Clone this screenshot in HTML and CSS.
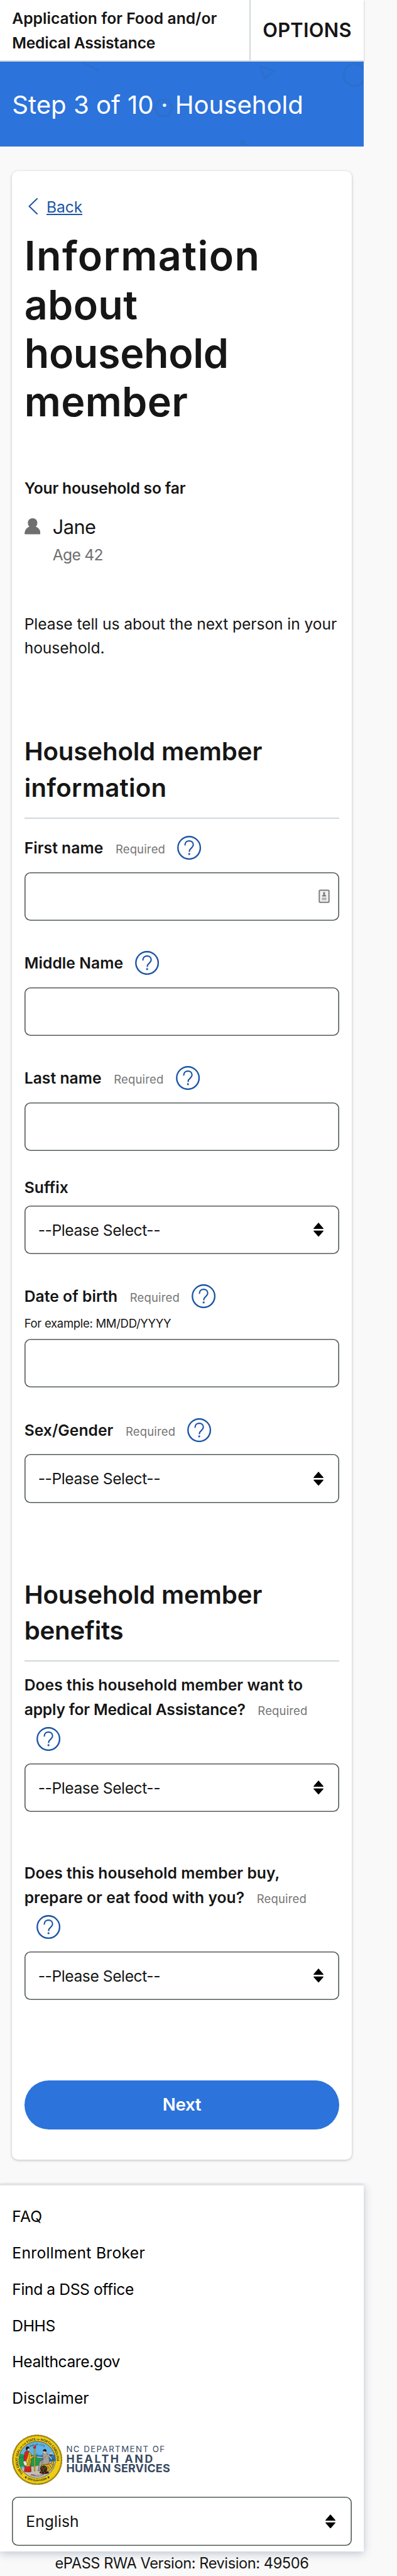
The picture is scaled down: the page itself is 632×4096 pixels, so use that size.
FILE: index.html
```html
<!DOCTYPE html>
<html lang="en">
<head>
<meta charset="utf-8">
<title>ePASS - Household</title>
<link rel="stylesheet" href="styles.css">
</head>
<body>
<svg class="defs" aria-hidden="true">
  <symbol id="help" viewBox="0 0 24 24">
    <circle cx="12" cy="12" r="11.2" fill="none" stroke="currentColor" stroke-width="1.5"/>
    <path d="M7.85 9.1C7.9 6.7 9.6 5.1 12.05 5.1c2.4 0 4.1 1.6 4.1 3.9 0 3.4-3.9 3.3-3.9 6.5" fill="none" stroke="currentColor" stroke-width="1.35" stroke-linecap="round"/>
    <circle cx="12.05" cy="18.2" r="1" fill="currentColor"/>
  </symbol>
  <symbol id="sort" viewBox="0 0 16 22.6">
    <path d="M8 0.1 15.800 8.9Q16.2 9.9 15.2 9.9H.8Q-.2 9.9.2 8.9ZM8 22.5 15.800 13.7Q16.2 12.7 15.2 12.7H.8Q-.2 12.7.2 13.7Z"/>
  </symbol>
</svg>

<div class="page">
  <header class="topbar">
    <div class="app-title">Application for Food and/or<br><span class="line2">Medical Assistance</span></div>
    <button class="options" type="button">OPTIONS</button>
  </header>

  <div class="banner">
    <svg class="banner-art" viewBox="0 0 579 135" fill="none" stroke="#2d6fcb" stroke-width="3" aria-hidden="true">
      <path d="M133 2 157 14"/>
      <path d="M414.500 8 437 14 421 27Z"/>
      <ellipse cx="564.500" cy="21" rx="17.500" ry="17.500"/>
      <path d="M253 61.500h15l7 12-7 13h-15l-7-13Z"/>
      <circle cx="386.600" cy="129" r="4" fill="#2d6fcb" stroke="none"/>
      <circle cx="54" cy="60" r="4" fill="#2d6fcb" stroke="none"/>
    </svg>
    <div class="step">Step 3 of 10 · Household</div>
  </div>

  <main class="card">
    <div class="back">
      <svg class="chevron" viewBox="0 0 15 26" aria-hidden="true"><path d="M14 1 1.500 13 14 25" fill="none" stroke="currentColor" stroke-width="2" stroke-linecap="round" stroke-linejoin="round"/></svg>
      <a class="back-link" href="#">Back</a>
    </div>
    <h1 class="title">Information<br><span class="tight">about</span><br><span class="tighter">household</span><br><span class="tight">member</span></h1>

    <div class="sofar">Your household so far</div>
    <div class="person">
      <svg class="avatar" viewBox="0 0 26 26" aria-hidden="true"><path d="M13 0c4.300 0 7.600 3 7.600 7.400 0 2.800-.8 4.900-2.500 6.300 4.300 1.300 7.500 5.300 7.900 11.300q0 1-1 1H1q-1 0-1-1c.4-6 3.600-10 7.900-11.300C6.200 12.300 5.400 10.200 5.400 7.400 5.400 3 8.700 0 13 0Z" fill="#6f6f6f"/></svg>
      <div>
        <div class="name">Jane</div>
        <div class="age">Age 42</div>
      </div>
    </div>
    <p class="intro">Please tell us about the next person in your<br>household.</p>

    <h2 class="section">Household member<br><span class="sec2">information</span></h2>

    <div class="field first">
      <div class="label-row"><label class="label">First name<span class="required">Required</span></label><svg class="help"><use href="#help"/></svg></div>
      <div class="control">
        <input class="input" type="text">
        <svg class="autofill" viewBox="0 0 18 22" aria-hidden="true"><rect x="1.300" y="1.300" width="15.400" height="19.400" rx="1.500" fill="#f2f2f2" stroke="#7e7e7e" stroke-width="2"/><path d="M9 4.200c1.400 0 1.600 1.200 1.500 2.400-.1.900-.3 1.400-.3 1.900l2 1.200v1.700H5.800V9.700l2-1.200c0-.5-.2-1-.3-1.900C7.400 5.400 7.600 4.200 9 4.200Z" fill="#7c7c7c"/><path d="M5.300 13h7.400v4.200H5.300Z" fill="#b5b5b5"/></svg>
      </div>
    </div>
    <div class="field">
      <div class="label-row"><label class="label">Middle Name</label><svg class="help"><use href="#help"/></svg></div>
      <div class="control"><input class="input" type="text"></div>
    </div>
    <div class="field">
      <div class="label-row"><label class="label">Last name<span class="required">Required</span></label><svg class="help"><use href="#help"/></svg></div>
      <div class="control"><input class="input" type="text"></div>
    </div>
    <div class="field plain">
      <div class="label-row"><label class="label">Suffix</label></div>
      <div class="control"><select class="input select"><option>--Please Select--</option></select><svg class="sort"><use href="#sort"/></svg></div>
    </div>
    <div class="field dob">
      <div class="label-row"><label class="label">Date of birth<span class="required">Required</span></label><svg class="help"><use href="#help"/></svg></div>
      <div class="hint">For example: MM/DD/YYYY</div>
      <div class="control"><input class="input" type="text"></div>
    </div>
    <div class="field">
      <div class="label-row"><label class="label">Sex/Gender<span class="required">Required</span></label><svg class="help"><use href="#help"/></svg></div>
      <div class="control"><select class="input select"><option>--Please Select--</option></select><svg class="sort"><use href="#sort"/></svg></div>
    </div>

    <h2 class="section">Household member<br><span class="sec3">benefits</span></h2>

    <div class="question q1">
      <label class="label">Does this household member want to<br><span class="ask">apply for Medical Assistance?</span><span class="required">Required</span></label>
      <svg class="help"><use href="#help"/></svg>
      <div class="control"><select class="input select"><option>--Please Select--</option></select><svg class="sort"><use href="#sort"/></svg></div>
    </div>
    <div class="question q2">
      <label class="label">Does this household member buy,<br>prepare or eat food with you?<span class="required">Required</span></label>
      <svg class="help"><use href="#help"/></svg>
      <div class="control"><select class="input select"><option>--Please Select--</option></select><svg class="sort"><use href="#sort"/></svg></div>
    </div>

    <button class="next" type="button">Next</button>
  </main>

  <footer class="footer">
    <nav class="links">
      <a class="link wide" href="#">FAQ</a>
      <a class="link wide" href="#">Enrollment Broker</a>
      <a class="link narrow" href="#">Find a DSS office</a>
      <a class="link narrow" href="#">DHHS</a>
      <a class="link narrow" href="#">Healthcare.gov</a>
      <a class="link" href="#">Disclaimer</a>
    </nav>
    <div class="brand">
      <svg class="seal" viewBox="18 36 450 450" role="img" aria-label="The Great Seal of the State of North Carolina">
        <defs>
          <path id="ringTop" d="M119 382A173 173 0 1 1 367 382"/>
          <path id="ringBottom" d="M106 396A194 194 0 0 0 380 396"/>
          <path id="innerTop" d="M156 166A128 128 0 0 1 330 166"/>
          <path id="innerBottom" d="M142 371A150 150 0 0 0 344 371"/>
          <clipPath id="scene"><circle cx="243" cy="261" r="161"/></clipPath>
        </defs>
        <circle cx="243" cy="261" r="224" fill="#d4b11b"/>
        <circle cx="243" cy="261" r="219" fill="none" stroke="#5a4c16" stroke-width="9" stroke-dasharray="3 4"/>
        <circle cx="243" cy="261" r="213" fill="#f0cd14" stroke="#4a4018" stroke-width="2"/>
        <circle cx="243" cy="261" r="163" fill="#62b3e6" stroke="#2a2a22" stroke-width="4"/>
        <g clip-path="url(#scene)">
          <path d="M235 219H410V285H235Z" fill="#1c6cb8"/>
          <path d="M235 226h150M240 236h150" stroke="#5ba4dc" stroke-width="3"/>
          <path d="M78 220c25-22 48-5 60 4 30-22 62-12 82 10 40 6 60 16 92 48l20 40H78Z" fill="#1f9a52"/>
          <path d="M84 250c30-20 50-14 66-4M200 225c-16 18-22 40-24 60" fill="none" stroke="#1a4c30" stroke-width="3"/>
          <path d="M78 350c40-16 62-12 104-28 60 4 110-22 150-42l78-6v160H78Z" fill="#c6beb3"/>
          <path d="M350 214h32l-4 12h-24Z" fill="#4b3c34"/>
          <path d="M353 195h8v16h-8ZM363 191h8v20h-8ZM373 196h8v15h-8Z" fill="#eee" stroke="#666" stroke-width="1.500"/>
        </g>
        <path d="M132 196c8-14 22-16 38-8l16 24-4 66 8 88-14 4-48-4 10-80-14-26Z" fill="#e0201f" stroke="#2a1a14" stroke-width="3"/>
        <path d="M168 190c16 6 24 18 22 42l24-10 4 8-28 22c-2 34-6 58-12 68l-42 2c0-42 14-68 20-84Z" fill="#e8bd1c" stroke="#3a2c12" stroke-width="3"/>
        <path d="M172 206c8 28-6 62-14 104M184 250c-6 20-10 40-12 62" fill="none" stroke="#3a2c12" stroke-width="3"/>
        <circle cx="157" cy="166" r="14" fill="#efc9a2"/>
        <path d="M142 170c-4-20 6-30 18-28 14 2 16 14 12 20-12-4-16 4-18 22Z" fill="#1d1712"/>
        <path d="M150 342l-8 26M166 344l-2 26M178 330l4 36" stroke="#7d0f12" stroke-width="3"/>
        <path d="M116 276l24-6 16 34-26 10Z" fill="#fff" stroke="#222" stroke-width="3"/>
        <path d="M124 284l16-4M128 292l16-5M132 300l14-5" stroke="#777" stroke-width="2"/>
        <path d="M216 158h9v204h-9Z" fill="#f0cb18" stroke="#4a3a10" stroke-width="2.500"/>
        <path d="M210 158c-4-14 6-20 20-26 4 12 0 20-4 28Z" fill="#d81f26" stroke="#3a1010" stroke-width="2"/>
        <path d="M232 204l8 34M248 206l-6 34M226 222l16 20" stroke="#1c3a2a" stroke-width="2.500"/>
        <path d="M238 236l58 8 8-26" fill="none" stroke="#efc9a2" stroke-width="7"/>
        <path d="M292 212c10-16 40-16 46 2l14 42-2 30c-20 16-28 40-48 70l-54 4c16-18 4-58 16-82l30-20Z" fill="#a9a196" stroke="#33302c" stroke-width="3"/>
        <path d="M320 228c-14 28-34 34-42 60M300 270c-18 24-20 50-36 84" fill="none" stroke="#55504a" stroke-width="3"/>
        <circle cx="312" cy="190" r="14" fill="#efc9a2"/>
        <path d="M296 188c-4-20 12-24 22-20 12 6 10 18 2 26-2-8-12-12-24-6Z" fill="#1d1712"/>
        <path d="M340 220l34 34" stroke="#efc9a2" stroke-width="7"/>
        <path d="M382 256c14 20 10 78-34 106l-66-2c-22-28-4-58 28-56 46 0 66-14 72-48Z" fill="#e3b41b" stroke="#2f2410" stroke-width="4"/>
        <path d="M366 290l18 20M350 306l20 26M334 314l18 32" stroke="#2f2410" stroke-width="4"/>
        <ellipse cx="303" cy="340" rx="31" ry="29" fill="#3b2a16"/>
        <path d="M262 378c10-24 34-22 48-16 20-2 38 4 40 16-20 12-60 14-88 0Z" fill="#201a12"/>
        <g fill="#c8262a"><circle cx="300" cy="344" r="7"/><circle cx="282" cy="370" r="7"/><circle cx="308" cy="374" r="7"/><circle cx="328" cy="366" r="5"/></g>
        <g fill="#35843c"><circle cx="314" cy="332" r="6"/><circle cx="296" cy="361" r="6"/><circle cx="288" cy="334" r="5"/></g>
        <g class="seal-text">
          <text><textPath href="#ringTop" textLength="690">THE GREAT SEAL <tspan font-size="20">OF THE</tspan> STATE <tspan font-size="20">OF</tspan> NORTH CAROLINA</textPath></text>
          <text font-size="23"><textPath href="#ringBottom" startOffset="50%" text-anchor="middle" textLength="182">ESSE QUAM VIDERI</textPath></text>
          <text font-size="19"><textPath href="#innerTop" startOffset="50%" text-anchor="middle" textLength="132">MAY 20, 1775</textPath></text>
          <text font-size="19"><textPath href="#innerBottom" startOffset="50%" text-anchor="middle" textLength="122">APRIL 12, 1776</textPath></text>
        </g>
        <g fill="#222">
          <path d="M142 406l3 7 8 1-6 5 2 8-7-4-7 4 2-8-6-5 8-1Z"/>
          <path d="M344 406l3 7 8 1-6 5 2 8-7-4-7 4 2-8-6-5 8-1Z"/>
        </g>
      </svg>
      <div class="brand-text">
        <div class="dept">NC DEPARTMENT OF</div>
        <div class="health">HEALTH AND</div>
        <div class="human">HUMAN SERVICES</div>
      </div>
    </div>
    <div class="control"><select class="input select lang"><option>English</option></select><svg class="sort"><use href="#sort"/></svg></div>
  </footer>
  <div class="version">ePASS RWA Version: Revision: 49506</div>
</div>
</body>
</html>
```
FILE: styles.css
```css
* { box-sizing: border-box; }

html, body { margin: 0; padding: 0; }

body {
  height: 4096px;
  overflow: hidden;
  background: #f9f9f9;
  color: #161616;
  font-family: Inter, "Liberation Sans", sans-serif;
  font-size: 24.67px;
  line-height: 38.6px;
  white-space: nowrap;
}

.defs { position: absolute; width: 0; height: 0; }

.page { width: 579px; }

/* Top bar */
.topbar {
  display: flex;
  height: 98px;
  background: #fff;
  border-bottom: 2px solid #d0d9dc;
  box-shadow: 0 1px 3px rgba(0, 0, 0, .25);
}
.app-title {
  flex: 1;
  align-self: center;
  padding: 1px 0 0 19.3px;
  font-weight: 600;
}
.line2 { letter-spacing: -.26px; }
.options {
  width: 182px;
  padding: 0;
  border: 0;
  border-left: 2px solid #d0d9dc;
  background: none;
  color: inherit;
  font: 600 30.8px/48px Inter, sans-serif;
  letter-spacing: .28px;
}

/* Step banner */
.banner {
  position: relative;
  height: 134.6px;
  padding: 40px 0 0 19.3px;
  background: #2c73db;
  color: #fff;
}
.banner-art { position: absolute; left: 0; top: 0; width: 579px; height: 135px; }
.step { position: relative; font-size: 40.2px; line-height: 58px; letter-spacing: -.05px; }

/* Card */
.card {
  width: 540.4px;
  height: 3162.3px;
  margin: 39px 0 0 19.3px;
  padding: 38.9px 19.4px 0;
  border-radius: 9.6px;
  background: #fff;
  box-shadow: 0 1px 4px rgba(0, 0, 0, .25);
}
.back { display: flex; color: #1c56a6; }
.chevron { width: 15px; height: 26px; margin: 4.4px 14.2px 0 6.2px; }
.back-link {
  color: inherit;
  letter-spacing: -.15px;
  text-decoration: underline;
  text-decoration-thickness: 1.6px;
  text-underline-offset: 2px;
  text-decoration-skip-ink: none;
}
.title {
  margin: 19.3px 0 0;
  font-size: 64.6px;
  line-height: 77.2px;
  font-weight: 600;
  letter-spacing: 1.4px;
}
.tight { letter-spacing: .3px; }
.tighter { letter-spacing: -.35px; }

.sofar { margin-top: 80.2px; font-weight: 600; letter-spacing: -.19px; }
.person { display: flex; margin-top: 18.5px; }
.avatar { width: 25.8px; height: 25.6px; margin: 9.7px 19.3px 0 0; }
.name { font-size: 30.8px; line-height: 48.4px; letter-spacing: -.59px; }
.age { color: #6f6f6f; letter-spacing: -.75px; }
.intro { margin: 71.3px 0 0; letter-spacing: -.11px; }

.section {
  margin: 116.2px 0 0;
  padding-bottom: 17.6px;
  border-bottom: 2px solid #d0d9dc;
  font-size: 40.2px;
  line-height: 57.9px;
  font-weight: 600;
  letter-spacing: -.13px;
}
.field + .section { margin-top: 116.9px; }
.sec2 { letter-spacing: .28px; }
.sec3 { letter-spacing: -.22px; }

/* Form fields */
.field { margin-top: 48.2px; }
.field.first { margin-top: 27.2px; }
.field.plain { margin-top: 38.8px; }
.label-row { display: flex; height: 38.6px; margin-bottom: 19.3px; }
.plain .label-row { margin-bottom: 9.2px; }
.dob .label-row { margin-bottom: 9.4px; }
.label { font-weight: 600; letter-spacing: .04px; }
.ask { letter-spacing: -.21px; }
.required {
  margin-left: 19.6px;
  color: #757575;
  font-size: 18.5px;
  line-height: 1;
  font-weight: 400;
  letter-spacing: .15px;
}
.help { flex: none; width: 38.2px; height: 38.2px; margin-left: 19.3px; color: #1c56a6; }
.hint { height: 38.9px; font-size: 18.5px; line-height: 28.9px; letter-spacing: -.3px; }

.control { position: relative; height: 77.2px; }
.input {
  display: block;
  width: 100%;
  height: 77.2px;
  margin: 0;
  padding: 0 22px;
  border: 0;
  border-radius: 9.6px;
  background: #fff;
  box-shadow: inset 0 0 0 1.6px #535a5a;
  color: #161616;
  font: 400 24.67px/38.6px Inter, sans-serif;
  outline: 0;
}
.select { appearance: none; padding-top: 1px; letter-spacing: -.45px; }
.sort { position: absolute; right: 25.7px; top: 27.4px; width: 16.1px; height: 22.6px; }
.autofill { position: absolute; right: 15.4px; top: 27.4px; width: 18px; height: 22.3px; }

.question .label { display: block; height: 86.1px; }
.question .help { display: block; margin-bottom: 19.5px; }
.q1 { margin-top: 18.2px; }
.q2 { margin-top: 78.2px; }

.next {
  display: block;
  width: 100%;
  height: 77.4px;
  margin-top: 128px;
  padding: 0 0 1px;
  border: 0;
  border-radius: 38.7px;
  background: #2c73db;
  color: #fff;
  font: 600 27.7px/40px Inter, sans-serif;
  letter-spacing: -.3px;
}

/* Footer */
.footer {
  margin-top: 38.6px;
  height: 584.9px;
  padding: 29.5px 19.3px 0;
  border-top: 3px solid #e4e4e4;
  background: #fff;
  box-shadow: 0 3px 13px rgba(50, 75, 110, .3);
  clip-path: inset(-2px -20px -20px 0);
}
.links { display: flex; flex-direction: column; gap: 19.28px; }
.link { color: #000; text-decoration: none; letter-spacing: .05px; }
.link.wide { letter-spacing: .28px; }
.link.narrow { letter-spacing: -.42px; }
.brand { display: flex; margin: 37.9px 0 19.3px; color: #37495f; }
.seal { width: 80.4px; height: 80.4px; margin-right: 5.7px; }
.seal-text { font-family: Lato, sans-serif; font-size: 29px; font-weight: 700; fill: #2b2818; }
.brand-text { padding-top: 15.4px; }
.dept { font-size: 13.3px; line-height: 16px; letter-spacing: 1.43px; }
.health { font-size: 17.7px; line-height: 16px; font-weight: 700; letter-spacing: 2.62px; }
.human { font-size: 17.9px; line-height: 14px; font-weight: 700; letter-spacing: .21px; }
.lang { letter-spacing: .04px; }

.version {
  position: relative;
  text-align: center;
  font-size: 23.6px;
  letter-spacing: -.42px;
}
```
